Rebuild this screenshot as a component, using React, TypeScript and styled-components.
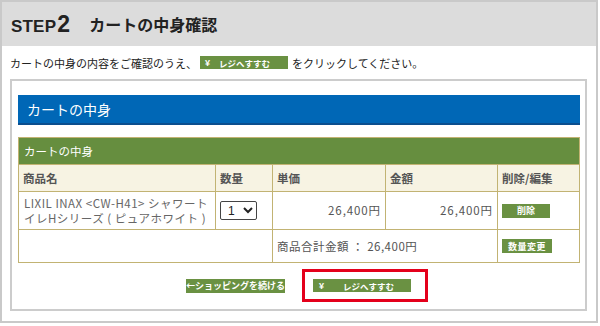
import {FC} from 'react'
import styled, {createGlobalStyle} from 'styled-components'

const GlobalStyle = createGlobalStyle`
  body {
    margin: 0;
    background: #ffffff;
    font-family: "Noto Sans CJK JP", "Noto Sans", sans-serif;
    color: #333333;
  }
`

const Frame = styled.div`
  width: 598px;
  height: 323px;
  box-sizing: border-box;
  border: 2px solid #c9c9c9;
  display: flex;
  flex-direction: column;
`

const Header = styled.div`
  height: 44px;
  background: #dcdcdc;
  display: flex;
  align-items: center;
  padding-left: 9px;
  gap: 19px;
`

const Step = styled.div`
  font-family: "Liberation Sans", Arial, sans-serif;
  font-weight: bold;
  font-size: 17px;
  color: #222222;
  letter-spacing: 0.2px;

  span {
    font-size: 23px;
    margin-left: 1px;
  }
`

const Title = styled.div`
  font-weight: bold;
  font-size: 16px;
  color: #222222;
`

const Intro = styled.div`
  height: 33px;
  display: flex;
  align-items: center;
  padding-left: 8px;
  font-size: 11px;
  color: #222222;
`

const Panel = styled.div`
  margin: 0 9px 0 8px;
  border: 2px solid #cccccc;
  padding: 14px 5px 7px 6px;
`

const BlueBar = styled.div`
  height: 28px;
  background: #0067b6;
  border-bottom: 2px solid #0b4e8e;
  color: #ffffff;
  font-size: 14px;
  display: flex;
  align-items: center;
  padding-left: 9px;
`

const Table = styled.table`
  margin-top: 12px;
  width: 100%;
  border-collapse: collapse;
  table-layout: fixed;
  font-size: 11.5px;
  color: #555555;
`

const Caption = styled.th`
  background: #668e3f;
  color: #ffffff;
  font-weight: normal;
  text-align: left;
  height: 26px;
  padding: 0 5px;
  border: 1px solid #c2b373;
`

const HeadCell = styled.th`
  background: #f7f3e3;
  height: 26px;
  text-align: left;
  font-weight: bold;
  color: #555555;
  padding: 0 4px;
  border: 1px solid #c2b373;
`

const Cell = styled.td<{right?: boolean}>`
  border: 1px solid #c2b373;
  height: 37px;
  padding: 0 4px;
  text-align: ${p => (p.right ? 'right' : 'left')};
  line-height: 15px;
  vertical-align: middle;
  letter-spacing: ${p => (p.right ? '0.9px' : '0')};
`

const TotalCell = styled(Cell)`
  height: 32px;
  letter-spacing: 0.5px;
`

const ProductName = styled.div`
  color: #666666;
  padding-left: 1px;
  letter-spacing: 0.5px;
`

const Select = styled.select`
  width: 37px;
  height: 19px;
  font-size: 12px;
  border: 1px solid #444444;
  border-radius: 2px;
  background: #ffffff;
  color: #222222;
  padding: 0 0 0 3px;
`

const SmallButton = styled.div<{w: number}>`
  width: ${p => p.w}px;
  height: 14px;
  background: #6a9142;
  color: #ffffff;
  font-size: 9px;
  font-weight: bold;
  display: flex;
  align-items: center;
  justify-content: center;
`

const ProceedButton = styled.div<{w: number}>`
  width: ${p => p.w}px;
  height: 13px;
  background: #6a9142;
  color: #ffffff;
  font-size: 8.5px;
  font-weight: bold;
  display: inline-flex;
  align-items: center;
  box-sizing: border-box;
  padding-left: 5px;
  vertical-align: middle;

  b {
    font-family: "Liberation Sans", Arial, sans-serif;
    font-size: 9px;
    width: 14px;
  }
`

const InlineProceed = styled(ProceedButton)`
  margin: 0 4px 0 3px;
`

const Actions = styled.div`
  margin-top: 6px;
  display: flex;
  align-items: center;
  justify-content: center;
  gap: 17px;
  padding-left: 16px;
`

const Highlight = styled.div`
  width: 126px;
  height: 33px;
  box-sizing: border-box;
  border: 3px solid #e4001b;
  display: flex;
  align-items: center;
  padding-left: 8px;

  ${ProceedButton} {
    padding-left: 6px;

    b {
      width: 24px;
    }
  }
`

const Proceed: FC<{w: number}> = ({w}) => (
  <ProceedButton w={w}>
    <b>¥</b>
    <span>レジへすすむ</span>
  </ProceedButton>
)

export default function App() {
  return (
    <>
      <GlobalStyle />
      <Frame>
        <Header>
          <Step>
            STEP<span>2</span>
          </Step>
          <Title>カートの中身確認</Title>
        </Header>
        <Intro>
          カートの中身の内容をご確認のうえ、
          <InlineProceed w={88}>
            <b>¥</b>
            <span>レジへすすむ</span>
          </InlineProceed>
          をクリックしてください。
        </Intro>
        <Panel>
          <BlueBar>カートの中身</BlueBar>
          <Table>
            <colgroup>
              <col style={{width: 197}} />
              <col style={{width: 57}} />
              <col style={{width: 113}} />
              <col style={{width: 112}} />
              <col />
            </colgroup>
            <thead>
              <tr>
                <Caption colSpan={5}>カートの中身</Caption>
              </tr>
              <tr>
                <HeadCell>商品名</HeadCell>
                <HeadCell>数量</HeadCell>
                <HeadCell>単価</HeadCell>
                <HeadCell>金額</HeadCell>
                <HeadCell>削除/編集</HeadCell>
              </tr>
            </thead>
            <tbody>
              <tr>
                <Cell>
                  <ProductName>
                    LIXIL INAX &lt;CW-H41&gt; シャワートイレHシリーズ ( ピュアホワイト )
                  </ProductName>
                </Cell>
                <Cell>
                  <Select defaultValue="1">
                    <option value="1">1</option>
                    <option value="2">2</option>
                  </Select>
                </Cell>
                <Cell right>26,400円</Cell>
                <Cell right>26,400円</Cell>
                <Cell>
                  <SmallButton w={48}>削除</SmallButton>
                </Cell>
              </tr>
              <tr>
                <TotalCell colSpan={2} />
                <TotalCell colSpan={2}>商品合計金額 ： 26,400円</TotalCell>
                <TotalCell>
                  <SmallButton w={50}>数量変更</SmallButton>
                </TotalCell>
              </tr>
            </tbody>
          </Table>
          <Actions>
            <SmallButton w={99}>←ショッピングを続ける</SmallButton>
            <Highlight>
              <Proceed w={98} />
            </Highlight>
          </Actions>
        </Panel>
      </Frame>
    </>
  )
}
